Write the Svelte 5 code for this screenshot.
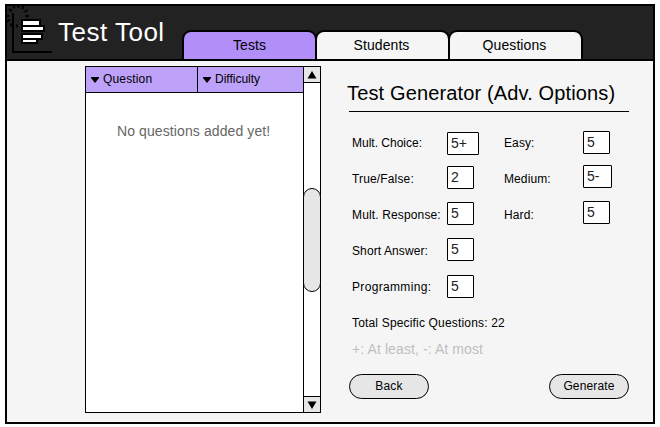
<script>
  const tabs = ['Tests', 'Students', 'Questions'];
  const types = [
    { label: 'Mult. Choice:', value: '5+', top: 7, width: 32, gap: 0 },
    { label: 'True/False:', value: '2', top: 5, width: 27, gap: 0.15 },
    { label: 'Mult. Response:', value: '5', top: 5, width: 27, gap: 0.14 },
    { label: 'Short Answer:', value: '5', top: 5, width: 27, gap: 0.1 },
    { label: 'Programming:', value: '5', top: 6, width: 27, gap: 0.33 }
  ];
  const levels = [
    { label: 'Easy:', value: '5', top: 6, width: 27, gap: 0.1 },
    { label: 'Medium:', value: '5-', top: 4, width: 29, gap: 0.1 },
    { label: 'Hard:', value: '5', top: 4, width: 27, gap: 0.1 }
  ];
</script>

{#snippet fields(list)}
  {#each list as f}
    <div class="field">
      <span class="name" style="letter-spacing:{f.gap}px">{f.label}</span>
      <span class="box" style="margin-top:{f.top}px;width:{f.width}px">{f.value}</span>
    </div>
  {/each}
{/snippet}

<div class="window">
  <header>
    <svg class="logo" width="55" height="57" viewBox="0 0 55 57">
      <g fill="none" stroke="#000" stroke-width="2">
        <path d="M13 13V52H52" />
        <path d="M9 9L12 11.500M13.500 5.500L14.500 8.500M18.500 5V8M23.500 6L22 9M27.500 10L24.500 12M25.500 16H29M24.500 20.500L27.500 22.500M17 24.500V27.500M12 23.500L10.500 26M7 21.500L10 19.500M6 16H9" />
      </g>
      <path d="M21 19H41V25H45V32H21ZM21 33H43V40H38V44H21Z" fill="#000" />
      <path d="M23 21H39V25H23ZM23 27H43V30H23ZM23 35H41V38H23ZM23 40H36V42H23Z" fill="#fff" />
    </svg>
    <h1>Test Tool</h1>
    <nav>
      {#each tabs as tab, i}
        <div class="tab" class:active={i === 0}>{tab}</div>
      {/each}
    </nav>
  </header>

  <main>
    <section class="list">
      <div class="table">
        <div class="heads">
          <div class="head"><svg width="8" height="6"><path d="M0 0H8V1L4 6L0 1Z" /></svg>Question</div>
          <div class="head"><svg width="8" height="6"><path d="M0 0H8V1L4 6L0 1Z" /></svg>Difficulty</div>
        </div>
        <p class="empty">No questions added yet!</p>
      </div>
      <div class="scroll">
        <div class="arrow up"><svg width="10" height="8"><path d="M0.500 7.500L5 0L9.500 7.500Z" /></svg></div>
        <div class="thumb"></div>
        <div class="arrow down"><svg width="10" height="8"><path d="M0.500 0.500H9.500L5 8Z" /></svg></div>
      </div>
    </section>

    <section class="options">
      <h2>Test Generator (Adv. Options)</h2>
      <div class="columns">
        <div class="types">{@render fields(types)}</div>
        <div class="levels">{@render fields(levels)}</div>
      </div>
      <p class="total">Total Specific Questions: 22</p>
      <p class="hint">+: At least, -: At most</p>
      <div class="actions">
        <button>Back</button>
        <button>Generate</button>
      </div>
    </section>
  </main>
</div>

<style>
  :global(body) { background: #fff; }
  :global(#app) { display: flow-root; }
  .window, .window * { box-sizing: border-box; }
  .window {
    width: 650px; height: 420px; margin: 4px 0 0 5px;
    border: 2px solid #000; background: #f5f5f5; color: #000;
    font: 12px/16px "Liberation Sans", Arial, sans-serif;
    white-space: nowrap;
  }
  h1, h2, p { margin: 0; font-weight: 400; }
  header { display: flex; height: 55px; background: #222; border-bottom: 2px solid #000; }
  .logo { flex: none; margin: -6px 0 0 -7px; }
  h1 { width: 123px; margin-left: 3px; color: #fff; font-size: 26px; line-height: 30px; padding-top: 11px; letter-spacing: .5px; }
  nav { display: flex; margin: 24px 0 0 1px; }
  .tab {
    width: 135px; height: 29px; margin-right: -2px; padding: 5px 2px 0 0;
    border: 2px solid #000; border-bottom: 0; border-radius: 9px 9px 0 0;
    background: #f5f5f5; text-align: center; font-size: 14px; letter-spacing: .08px;
  }
  .tab.active { padding-right: 0; background: #b28ef8; }
  main { display: flex; }
  .list { display: flex; width: 236px; height: 347px; margin: 5px 0 0 78px; border: 1px solid #000; background: #fff; }
  .table { width: 217px; }
  .heads { display: flex; height: 26px; background: #bea2f9; border-bottom: 1px solid #000; }
  .head { display: flex; width: 112px; padding: 4px 0 0 5px; border-right: 1px solid #000; letter-spacing: .15px; }
  .head:last-child { width: 105px; border-right: 0; letter-spacing: 0; }
  .head svg { margin: 6px 4px 0 0; }
  .empty { margin-top: 30px; padding-left: 31px; color: #666; font-size: 14px; letter-spacing: .1px; }
  .scroll { display: flex; flex-direction: column; width: 17px; border-left: 1px solid #000; }
  .arrow { display: flex; height: 16px; align-items: center; justify-content: center; background: #e6e6e6; }
  .up { border-bottom: 1px solid #000; }
  .down { margin-top: auto; border-top: 1px solid #000; }
  .thumb { width: 18px; height: 104px; margin: 105px 0 0 -1px; border: 1px solid #000; border-radius: 9px; background: #e6e6e6; }
  .options { width: 282px; margin-left: 26px; }
  h2 { height: 51px; margin-left: 2px; padding-top: 20px; font-size: 20px; line-height: 24px; border-bottom: 1px solid #000; letter-spacing: .14px; text-indent: -2px; }
  .columns { display: flex; height: 193px; padding: 13px 0 0 5px; }
  .types { width: 152px; }
  .field { display: flex; height: 36px; }
  .name { width: 95px; padding-top: 10px; }
  .levels .name { width: 79px; }
  .box { height: 23px; padding: 2px 0 0 3px; border: 1px solid #000; border-radius: 1px; background: #fff; font-size: 14px; color: #222; }
  .total { margin: 10px 0 0 5px; letter-spacing: .17px; }
  .hint { margin: 10px 0 0 5px; color: #bfbfbf; font-size: 14px; letter-spacing: .1px; }
  .actions { display: flex; justify-content: space-between; margin-top: 17px; padding-left: 2px; }
  button { width: 80px; height: 25px; padding: 0 0 1px; border: 1px solid #000; border-radius: 13px; background: #e6e6e6; color: #000; font: inherit; letter-spacing: .15px; }
</style>
